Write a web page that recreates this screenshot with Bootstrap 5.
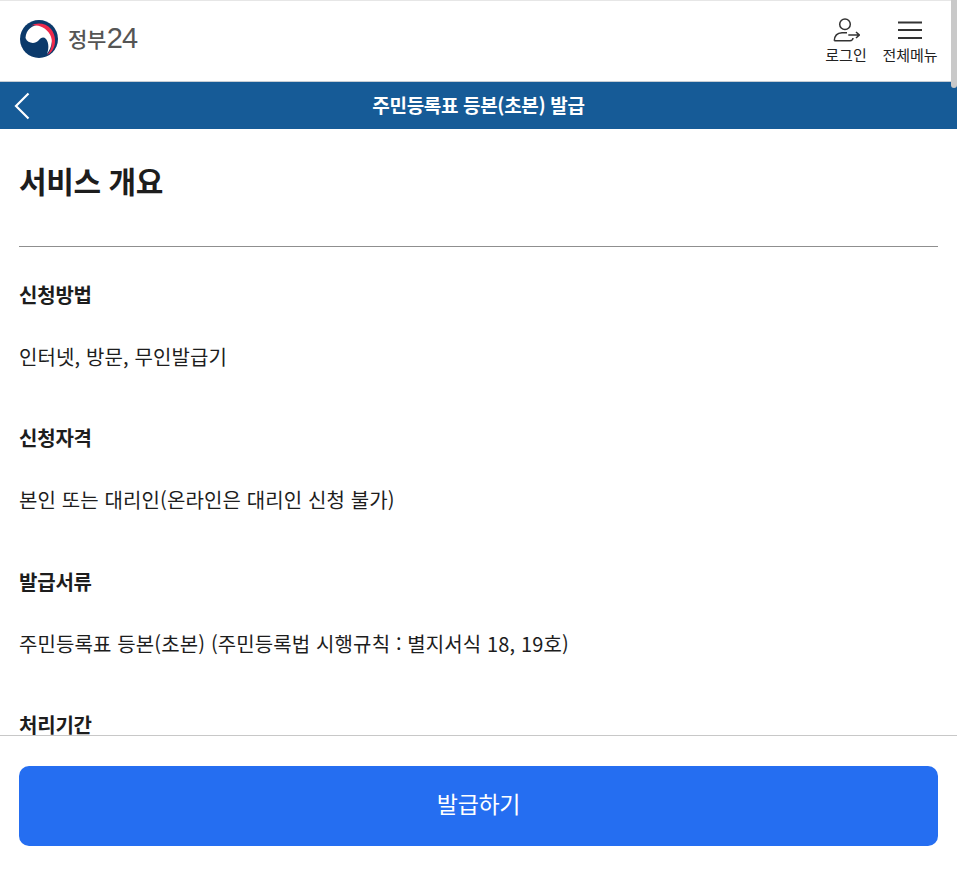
<!DOCTYPE html>
<html lang="ko">
<head>
<meta charset="utf-8">
<title>주민등록표 등본(초본) 발급</title>
<link href="https://cdn.jsdelivr.net/npm/bootstrap@5.3.0/dist/css/bootstrap.min.css" rel="stylesheet">
<style>
html,body{height:100%;overflow:hidden}
body{font-family:"Noto Sans CJK KR","Noto Sans",sans-serif;color:#1d1d1d;background:#fff}
.shell{height:873px;position:relative}
.topbar{flex:none;height:82px;border-top:1px solid #e6e6e6;border-bottom:1px solid #c6cdd4;padding:0 19px 2px}
.logo-link{margin-bottom:3px}
.logo-word{font-size:21px;line-height:1;color:#555;font-weight:500;letter-spacing:-.4px;display:flex;align-items:center;padding-left:1px}
.logo-num{font-family:"Liberation Sans",sans-serif;font-size:29px;font-weight:400;letter-spacing:-1px;padding-left:1px}
.tool{width:56px;font-size:15px;line-height:18px;color:#222;letter-spacing:0;white-space:nowrap}
.tool-label{padding-top:2px}
.titlebar{flex:none;height:47px;background:#165b97;color:#fff;font-size:19px;font-weight:700;letter-spacing:-.33px;position:relative}
.back{position:absolute;left:14px;top:10px;line-height:0}
.body-area{flex:1 1 auto;min-height:0;overflow:hidden;padding:0 19px}
.main-title{font-size:30px;line-height:42px;font-weight:700;margin:30px 0 45px;letter-spacing:-.4px;color:#1d1d1d}
.rule-line{border-top:1px solid #8f8f8f;margin-bottom:33px}
.sub-title{font-size:20px;line-height:30px;font-weight:700;margin:0 0 32px;letter-spacing:-.2px}
.sub-text{font-size:20px;line-height:30px;margin:0 0 51.4px;letter-spacing:.12px}
.footer-bar{flex:none;height:138px;border-top:1px solid #c8c8c8;padding:30px 19px 0;background:#fff}
.issue-btn{height:80px;background:#256ef1;border:0;border-radius:10px;font-size:23px;line-height:1.2;padding:0 0 4px;color:#fff;letter-spacing:-.3px}
.issue-btn:hover{background:#256ef1;color:#fff}
.thumb{position:absolute;right:0;top:0;width:6px;height:88px;background:#c9c9c9;border-radius:0 0 4px 4px}
</style>
</head>
<body>
<div class="shell d-flex flex-column">
  <header class="topbar d-flex align-items-center justify-content-between">
    <a href="#" class="logo-link d-flex align-items-center gap-2 text-decoration-none">
      <svg width="40" height="40" viewBox="0 0 40 40">
        <circle cx="20" cy="20" r="19" fill="#0b3a6b"/>
        <path d="M6.500 19C7 10 15 5 22 6C29 7 34 15 33 22C32.500 28 30 32 28 35C30 30 30 24 27 20C24.500 17.500 22 18.500 19.500 21.500C16 25.500 8.500 24.500 6.500 19Z" fill="#fff"/>
        <path d="M12 6.500C18 3 27 4 32 10C37 16 37.500 26 33 32C31.500 34 30 35 28 36C33 31 34.500 22 31 15.500C27 8.500 19 5.500 12 6.500Z" fill="#ee2a4c"/>
      </svg>
      <span class="logo-word">정부<span class="logo-num">24</span></span>
    </a>
    <div class="d-flex gap-2">
      <a href="#" class="tool d-flex flex-column align-items-center text-decoration-none">
        <svg width="28" height="28" viewBox="0 0 28 28" fill="none" stroke="#333" stroke-width="1.500">
          <circle cx="13" cy="8.300" r="5.300"/>
          <path d="M2.300 24.700C2.500 20 5 17 10 16.800H15"/>
          <path d="M2.300 24.700H18C20 24.700 21 23 21 22"/>
          <path d="M16.300 19H27.300M24 16L27.300 19L24 22"/>
        </svg>
        <span class="tool-label">로그인</span>
      </a>
      <a href="#" class="tool d-flex flex-column align-items-center text-decoration-none">
        <svg width="28" height="28" viewBox="0 0 28 28" fill="none" stroke="#333" stroke-width="2">
          <path d="M2 6.500H26M2 14H26M2 22H26"/>
        </svg>
        <span class="tool-label">전체메뉴</span>
      </a>
    </div>
  </header>
  <div class="titlebar d-flex align-items-center justify-content-center">
    <a href="#" class="back" aria-label="뒤로">
      <svg width="16" height="28" viewBox="0 0 16 28" fill="none" stroke="#fff" stroke-width="2.200"><path d="M14.500 1.500L2 14L14.500 26.500"/></svg>
    </a>
    주민등록표 등본(초본) 발급
  </div>
  <main class="body-area">
    <h1 class="main-title">서비스 개요</h1>
    <div class="rule-line"></div>
    <h2 class="sub-title">신청방법</h2>
    <p class="sub-text">인터넷, 방문, 무인발급기</p>
    <h2 class="sub-title">신청자격</h2>
    <p class="sub-text">본인 또는 대리인(온라인은 대리인 신청 불가)</p>
    <h2 class="sub-title">발급서류</h2>
    <p class="sub-text">주민등록표 등본(초본) (주민등록법 시행규칙 : 별지서식 18, 19호)</p>
    <h2 class="sub-title">처리기간</h2>
  </main>
  <footer class="footer-bar">
    <button type="button" class="btn issue-btn w-100">발급하기</button>
  </footer>
  <div class="thumb"></div>
</div>
<script src="https://cdn.jsdelivr.net/npm/bootstrap@5.3.0/dist/js/bootstrap.bundle.min.js"></script>
</body>
</html>
